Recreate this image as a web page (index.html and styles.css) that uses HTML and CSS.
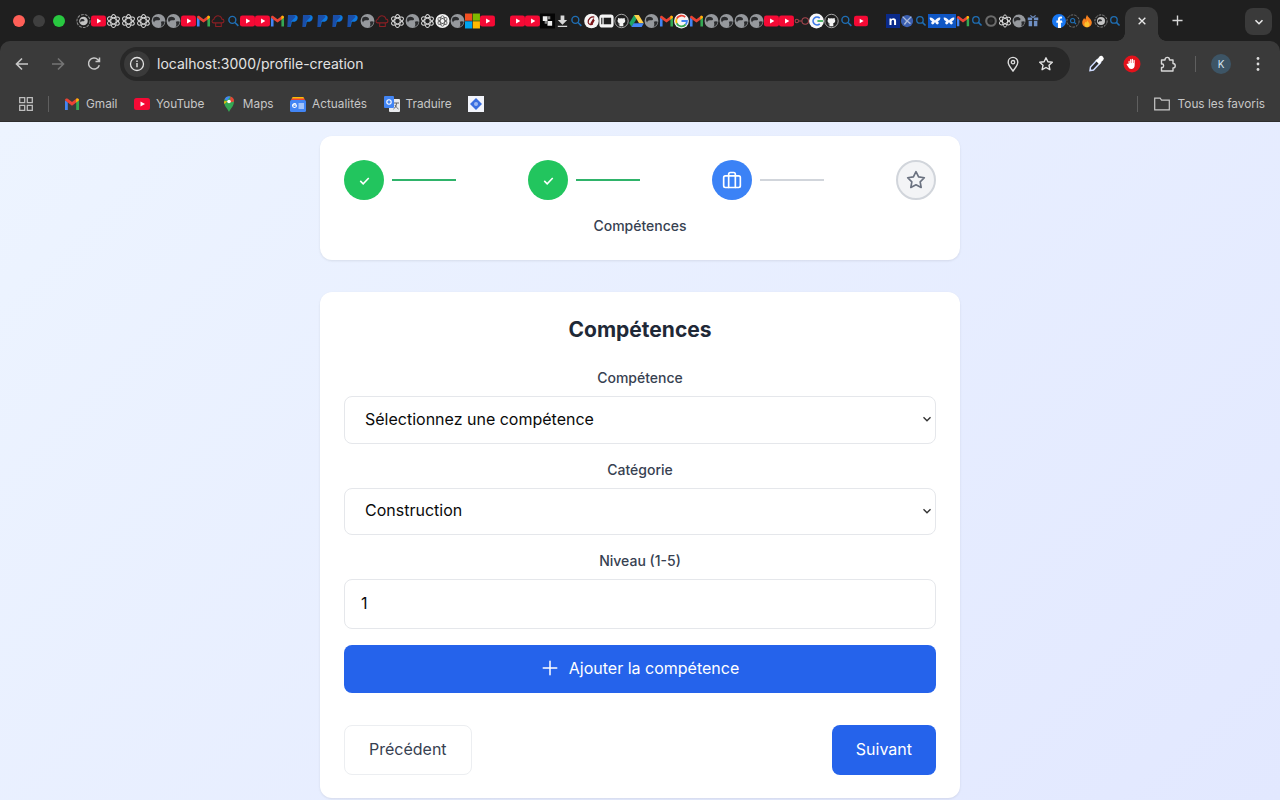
FILE: index.html
```html
<!DOCTYPE html>
<html lang="fr">
<head>
<meta charset="utf-8">
<title>Profile creation</title>
<link rel="stylesheet" href="styles.css">
</head>
<body>
<svg class="defs" aria-hidden="true">
  <symbol id="yt" viewBox="0 0 16 16"><rect y="2" width="16" height="12" rx="2.5" fill="#f50a35"/><path d="M6.5 5.4 11 8l-4.5 2.6z" fill="#fff"/></symbol>
  <symbol id="oa" viewBox="0 0 16 16"><g fill="none" stroke="#d8d8d8" stroke-width="1.100"><ellipse cx="8" cy="8" rx="2.900" ry="7"/><ellipse cx="8" cy="8" rx="2.900" ry="7" transform="rotate(60 8 8)"/><ellipse cx="8" cy="8" rx="2.900" ry="7" transform="rotate(120 8 8)"/></g></symbol>
  <symbol id="oaw" viewBox="0 0 16 16"><circle cx="8" cy="8" r="7.600" fill="#f4f4f4"/><g fill="none" stroke="#555" stroke-width=".9"><ellipse cx="8" cy="8" rx="2.400" ry="5.600"/><ellipse cx="8" cy="8" rx="2.400" ry="5.600" transform="rotate(60 8 8)"/><ellipse cx="8" cy="8" rx="2.400" ry="5.600" transform="rotate(120 8 8)"/></g></symbol>
  <symbol id="globe" viewBox="0 0 16 16"><circle cx="8" cy="8" r="7.400" fill="#96999d"/><path d="M3 4.200c3-1.600 5.500-.6 6.500 1 .8 1.400-1 2.300-2.600 2-1.700-.3-3.300.7-3.500 2.400C1.800 8 1.900 5.600 3 4.200zM10.500 8.800c1.500-.8 3.200-.8 4.200 0-.3 2.500-2 4.700-4.400 5.500.9-1.600 1-3.700.2-5.500z" fill="#2c2d2f"/></symbol>
  <symbol id="gring" viewBox="0 0 16 16"><circle cx="8" cy="8" r="7" fill="none" stroke="#8a8a8a" stroke-width="1.100" stroke-dasharray="3 1.200"/><circle cx="8" cy="8" r="4.600" fill="#c4c4c4"/><path d="M5 6.500c2-1 3.500-.4 4 .5.500 1-.7 1.500-1.700 1.300-1-.2-2 .3-2.100 1.400C4.200 9 4.300 7.400 5 6.500z" fill="#2c2d2f"/></symbol>
  <symbol id="gm" viewBox="0 0 16 16"><path d="M1 14V4.200L3.800 6v8z" fill="#4285f4"/><path d="M15 14V4.200L12.200 6v8z" fill="#34a853"/><path d="M1 4.200C1 2.600 2.700 1.900 3.800 2.800L8 6l4.200-3.200c1.100-.9 2.800-.2 2.800 1.400L12.200 6.600 8 9.700 3.800 6.600z" fill="#ea4335"/><path d="M12.200 2.800c1.100-.9 2.800-.2 2.800 1.400l-2.800 2.400z" fill="#fbbc04"/></symbol>
  <symbol id="cloud" viewBox="0 0 16 16"><path d="M3 10c-2.500 0-2.500-3.500 0-3.700C3.500 3 7 1.500 9.500 3c1.500.8 2 2 2.200 3 2.800 0 3 4-.2 4zM5 10v4h6v-4" fill="none" stroke="#8b1f24" stroke-width="1.100"/></symbol>
  <symbol id="search" viewBox="0 0 16 16"><circle cx="6.800" cy="6.800" r="3.700" fill="none" stroke="#1f6fb5" stroke-width="1.500"/><path d="m9.600 9.600 3.600 3.600" stroke="#1f6fb5" stroke-width="1.700"/></symbol>
  <symbol id="pp" viewBox="0 0 16 16"><path d="M5 1.500h5.200c2.600 0 3.800 1.500 3.300 3.700-.5 2.400-2.300 3.600-4.700 3.600H7.200L6.300 14H3.300z" fill="#0f7ae0"/><path d="M3.200 1.500h5c2 0 3 .8 3 2.300L6.700 8.500 5.800 14.500H2.500z" fill="#1a4ea8"/></symbol>
  <symbol id="ms" viewBox="0 0 16 16"><path d="M0 0h7.700v7.700H0z" fill="#f25022"/><path d="M8.300 0H16v7.700H8.300z" fill="#7fba00"/><path d="M0 8.300h7.700V16H0z" fill="#00a4ef"/><path d="M8.300 8.300H16V16H8.300z" fill="#ffb900"/></symbol>
  <symbol id="chess" viewBox="0 0 16 16"><rect width="16" height="16" fill="#050505"/><path d="M3 3h5v5H3zM8 8h5v5H8z" fill="#eee"/><path d="M8 3h3v3H8zM5 8h3v3H5z" fill="#888"/></symbol>
  <symbol id="dl" viewBox="0 0 16 16"><path d="M6 2h4v5h3l-5 5-5-5h3zM3 13h10v1.500H3z" fill="#d8d8d8"/></symbol>
  <symbol id="at" viewBox="0 0 16 16"><circle cx="8" cy="8" r="7.800" fill="#f5f5f5"/><path d="M11 3.800C7.500 3 4 6 4.500 9.500c.4 2.300 3 3 5 1.700M10.500 5.500 7.500 10.500c-.5 1 .8 1 1.500.2L11 7" fill="none" stroke="#7a1418" stroke-width="1.300"/></symbol>
  <symbol id="box" viewBox="0 0 16 16"><rect x=".4" y="1" width="15.200" height="14" rx="3" fill="#f5f5f5"/><rect x="5" y="4.500" width="8" height="7" fill="#1f1f1f"/><path d="M3 4.500v7" stroke="#1f1f1f" stroke-width="1.200"/></symbol>
  <symbol id="ghr" viewBox="0 0 16 16"><circle cx="8" cy="8" r="7.200" fill="#1f1f1f" stroke="#bbb" stroke-width=".9"/><path d="M5.800 13.500v-2c-1.500.3-1.900-.8-1.900-.8.500.1 1 .5 1.900.3 0-.3.200-.6.300-.7-1.300-.2-2.300-.8-2.300-2.600 0-.6.200-1.100.600-1.500-.1-.2-.2-.8.100-1.500 0 0 .5-.2 1.500.6a6 6 0 0 1 3.800 0c1-.8 1.500-.6 1.500-.6.300.7.200 1.300.1 1.500.4.400.6.900.6 1.500 0 1.800-1 2.400-2.300 2.600.2.200.3.500.3 1v2.200z" fill="#f2f2f2"/></symbol>
  <symbol id="drive" viewBox="0 0 16 16"><path d="M5.500 1.500h5L5 11 2.500 14 .3 10.200z" fill="#1fa463"/><path d="M5.500 1.500h5l5.300 8.800h-5z" fill="#ffd04b"/><path d="M5 10.300h10.800L13.600 14.500H2.500z" fill="#4285f4"/></symbol>
  <symbol id="goog" viewBox="0 0 16 16"><circle cx="8" cy="8" r="7.900" fill="#f5f5f5"/><path d="M12 3.800A5.800 5.800 0 0 0 2.900 5.500" fill="none" stroke="#ea4335" stroke-width="2"/><path d="M2.900 5.500a5.800 5.800 0 0 0 0 5" fill="none" stroke="#fbbc04" stroke-width="2"/><path d="M2.900 10.500a5.800 5.800 0 0 0 9.600 1.200" fill="none" stroke="#34a853" stroke-width="2"/><path d="M12.500 11.700c1-1 1.300-2.300 1.300-3.700H8" fill="none" stroke="#4285f4" stroke-width="2"/></symbol>
  <symbol id="chain" viewBox="0 0 16 16"><g fill="none" stroke="#a8454e" stroke-width="1.100"><circle cx="3" cy="8" r="1.800"/><circle cx="12" cy="8" r="3.500"/><path d="M5 8h3.500"/></g></symbol>
  <symbol id="gcirc" viewBox="0 0 16 16"><circle cx="8" cy="8" r="7.900" fill="#f7f7f7"/><path d="M11.500 5A4.200 4.200 0 1 0 11.500 11" fill="none" stroke="#3b78e7" stroke-width="1.800"/><path d="M9 8h6" stroke="#34a853" stroke-width="1.800"/></symbol>
  <symbol id="n" viewBox="0 0 16 16"><rect width="16" height="16" fill="#0a2a8a"/><path d="M4 12.500V5h2.200v1c.6-.8 1.400-1.200 2.400-1.200 1.800 0 2.900 1.200 2.900 3.200v4.500H9.200V8.400c0-1-.5-1.600-1.400-1.600-.9 0-1.500.7-1.500 1.700v4z" fill="#fff"/></symbol>
  <symbol id="shield" viewBox="0 0 16 16"><circle cx="8" cy="8" r="7" fill="#3b5fb0"/><path d="M3 3l5 5 5-5M5 12l3-4 4 3" fill="none" stroke="#a9b8da" stroke-width="1.600"/></symbol>
  <symbol id="fly" viewBox="0 0 16 16"><rect width="16" height="16" fill="#0f56c4"/><path d="M2 4c2-.5 5 1.500 6 3.500C9 5.500 12 3.500 14 4c.500 2-1 4-3 4.200 1.500.5 1.800 2.700.3 3.600C10 12.500 8.800 10.500 8 9c-.8 1.500-2 3.500-3.300 2.800C3.200 10.900 3.500 8.700 5 8.200 3 8 1.500 6 2 4z" fill="#f4f7ff"/></symbol>
  <symbol id="ring" viewBox="0 0 16 16"><circle cx="8" cy="8" r="5.500" fill="none" stroke="#6b6b6b" stroke-width="2.400"/><circle cx="8" cy="8" r="2.400" fill="#2a2a2a"/></symbol>
  <symbol id="gift" viewBox="0 0 16 16"><path d="M2 4h5v3H2zM9 4h5v3H9zM3 8h4v6H3zM9 8h4v6H9z" fill="#6f8fc2"/><path d="M5 1.500 8 4l3-2.500" fill="none" stroke="#6f8fc2" stroke-width="1.300"/></symbol>
  <symbol id="fb" viewBox="0 0 16 16"><circle cx="8" cy="8" r="8" fill="#1877f2"/><path d="M6.800 16v-6H5V7.500h1.800V6c0-2 1.200-3.100 3-3.100.9 0 1.700.2 1.700.2v2h-1c-1 0-1.300.6-1.300 1.200v1.200h2.200L12 10H10.200v6z" fill="#fff"/></symbol>
  <symbol id="srch" viewBox="0 0 16 16"><circle cx="8" cy="8" r="7" fill="none" stroke="#7d7d7d" stroke-width="1" stroke-dasharray="3 1.200"/><circle cx="7.600" cy="7.600" r="2.400" fill="none" stroke="#1f6fb5" stroke-width="1.200"/><path d="m9.400 9.400 2 2" stroke="#1f6fb5" stroke-width="1.300"/></symbol>
  <symbol id="fire" viewBox="0 0 16 16"><path d="M8 .8c.5 2.700 5.500 4.700 5.500 9 0 3.200-2.500 5.400-5.500 5.400S2.500 13 2.500 9.800C2.500 7.500 4 6 4.700 4.700c.5 1 1 1.500 1.600 1.700C6.500 4.500 7 2.500 8 .8z" fill="#f7811e"/><path d="M8.300 7c.3 1.500 2.700 2.700 2.700 5 0 1.800-1.500 3-3 3s-3-1.200-3-3c0-1.500 1-2.500 1.500-3.200.3.500.6.800 1 .9C7.600 8.700 7.800 8 8.300 7z" fill="#fbc02d"/></symbol>
</svg>

<header class="chrome">
  <div class="tabstrip">
    <div class="lights"><span class="light red"></span><span class="light grey"></span><span class="light green"></span></div>
    <div class="favs">
      <svg class="fav"><use href="#gring"/></svg><svg class="fav"><use href="#yt"/></svg><svg class="fav"><use href="#oa"/></svg><svg class="fav"><use href="#oa"/></svg><svg class="fav"><use href="#oa"/></svg><svg class="fav"><use href="#globe"/></svg><svg class="fav"><use href="#globe"/></svg><svg class="fav"><use href="#yt"/></svg><svg class="fav"><use href="#gm"/></svg><svg class="fav"><use href="#cloud"/></svg><svg class="fav"><use href="#search"/></svg><svg class="fav"><use href="#yt"/></svg><svg class="fav"><use href="#yt"/></svg><svg class="fav"><use href="#gm"/></svg><svg class="fav"><use href="#pp"/></svg><svg class="fav"><use href="#pp"/></svg><svg class="fav"><use href="#pp"/></svg><svg class="fav"><use href="#pp"/></svg><svg class="fav"><use href="#pp"/></svg><svg class="fav"><use href="#globe"/></svg><svg class="fav"><use href="#cloud"/></svg><svg class="fav"><use href="#oa"/></svg><svg class="fav"><use href="#globe"/></svg><svg class="fav"><use href="#oa"/></svg><svg class="fav"><use href="#oaw"/></svg><svg class="fav"><use href="#globe"/></svg><svg class="fav"><use href="#ms"/></svg><svg class="fav"><use href="#yt"/></svg><span class="fav"></span><svg class="fav"><use href="#yt"/></svg><svg class="fav"><use href="#yt"/></svg><svg class="fav"><use href="#chess"/></svg><svg class="fav"><use href="#dl"/></svg><svg class="fav"><use href="#search"/></svg><svg class="fav"><use href="#at"/></svg><svg class="fav"><use href="#box"/></svg><svg class="fav"><use href="#ghr"/></svg><svg class="fav"><use href="#drive"/></svg><svg class="fav"><use href="#globe"/></svg><svg class="fav"><use href="#gm"/></svg><svg class="fav"><use href="#goog"/></svg><svg class="fav"><use href="#gm"/></svg><svg class="fav"><use href="#globe"/></svg><svg class="fav"><use href="#globe"/></svg><svg class="fav"><use href="#globe"/></svg><svg class="fav"><use href="#globe"/></svg><svg class="fav"><use href="#yt"/></svg><svg class="fav"><use href="#yt"/></svg><svg class="fav"><use href="#chain"/></svg><svg class="fav"><use href="#gcirc"/></svg><svg class="fav"><use href="#ghr"/></svg><svg class="fav"><use href="#search"/></svg>
      <svg class="fav nar"><use href="#yt"/></svg><span class="fav sp1"></span><svg class="fav nar"><use href="#n"/></svg><svg class="fav nar"><use href="#shield"/></svg><svg class="fav nar"><use href="#search"/></svg><svg class="fav nar"><use href="#fly"/></svg><svg class="fav nar"><use href="#fly"/></svg><svg class="fav nar"><use href="#gm"/></svg><svg class="fav nar"><use href="#search"/></svg><svg class="fav nar"><use href="#ring"/></svg><svg class="fav nar"><use href="#oa"/></svg><svg class="fav nar"><use href="#globe"/></svg><svg class="fav nar"><use href="#gift"/></svg><span class="fav sp2"></span><svg class="fav nar"><use href="#fb"/></svg><svg class="fav nar"><use href="#srch"/></svg><svg class="fav nar"><use href="#fire"/></svg><svg class="fav nar"><use href="#gring"/></svg><svg class="fav nar"><use href="#search"/></svg>
    </div>
    <div class="tab"><svg class="ic12" viewBox="0 0 12 12"><path d="m2 2 8 8M10 2l-8 8" stroke="#e8e8e8" stroke-width="1.600"/></svg></div>
    <svg class="newtab" viewBox="0 0 12 12"><path d="M6 .5v11M.5 6h11" stroke="#d8d8d8" stroke-width="1.500"/></svg>
    <div class="tabmenu"><svg class="ic10" viewBox="0 0 10 10"><path d="m1.500 3.200 3.500 3.500 3.500-3.500" fill="none" stroke="#e8e8e8" stroke-width="1.600"/></svg></div>
  </div>

  <div class="toolbar">
    <svg class="tb" viewBox="0 0 16 16"><path d="M14 8H2.500M8 2.500 2.500 8 8 13.500" fill="none" stroke="#c8c8c8" stroke-width="1.600"/></svg>
    <svg class="tb" viewBox="0 0 16 16"><path d="M2 8h11.500M8 2.500 13.500 8 8 13.500" fill="none" stroke="#757575" stroke-width="1.600"/></svg>
    <svg class="tb" viewBox="0 0 16 16"><path d="M13.300 9.200A5.500 5.500 0 1 1 12 3.700l1.500 1.700M13.500 1.500v4h-4" fill="none" stroke="#c8c8c8" stroke-width="1.500"/></svg>
    <div class="omnibox">
      <div class="sitechip"><svg class="ic16" viewBox="0 0 16 16"><circle cx="8" cy="8" r="6.500" fill="none" stroke="#e3e3e3" stroke-width="1.300"/><path d="M8 7v4.200M8 4.400v1.500" stroke="#e3e3e3" stroke-width="1.400"/></svg></div>
      <span class="url">localhost:3000/profile-creation</span>
      <svg class="omni-ic" viewBox="0 0 16 16"><path d="M8 15C5.500 11.500 3.200 9 3.200 6.200a4.800 4.800 0 0 1 9.600 0C12.800 9 10.500 11.500 8 15z" fill="none" stroke="#dcdcdc" stroke-width="1.400"/><circle cx="8" cy="6.200" r="1.700" fill="none" stroke="#dcdcdc" stroke-width="1.300"/></svg>
      <svg class="omni-ic" viewBox="0 0 16 16"><path d="m8 1.800 1.900 4 4.400.5-3.300 3 .9 4.400L8 11.500l-3.900 2.200.9-4.400-3.300-3 4.400-.5z" fill="none" stroke="#e3e3e3" stroke-width="1.400" stroke-linejoin="round"/></svg>
    </div>
    <div class="ext">
      <svg class="ext-ic" viewBox="0 0 18 18"><path d="M10.500 4.500 13.500 7.500 6.500 15 3 15.500 3.500 12z" fill="#2b2b2b" stroke="#cfdcff" stroke-width="1.500"/><path d="m9 5 4 4M11 5l2-3c.8-.8 1.700-.5 2.400.2s1 1.600.2 2.400L13 7z" fill="#fff" stroke="#fff" stroke-width="1.500"/></svg>
      <svg class="ext-ic" viewBox="0 0 18 18"><circle cx="9" cy="9" r="8.500" fill="#e3121b"/><path d="M5.500 9V6.500c0-1 1.200-1 1.200 0V8h.4V4.800c0-1 1.300-1 1.300 0V8h.4V4.500c0-1 1.300-1 1.300 0V8h.4V5.500c0-1 1.200-1 1.200 0V10c0 2.500-1.300 4-3.400 4-1.600 0-2.400-.8-3-2L3.800 9.800c-.5-.9.600-1.500 1.200-.7z" fill="#fff"/></svg>
      <svg class="ext-ic" viewBox="0 0 18 18"><path d="M2.500 5H6c0-3.500 4.500-3.500 4.500 0H14v3.500c3 0 3 4.500 0 4.500v3H2.500v-3.500h1c1.500 0 1.500-3.500 0-3.500h-1z" fill="none" stroke="#d8d8d8" stroke-width="1.400" stroke-linejoin="round"/></svg>
      <span class="vsep"></span>
      <span class="avatar">K</span>
      <svg class="menu" viewBox="0 0 4 16"><circle cx="2" cy="2.500" r="1.400" fill="#dcdcdc"/><circle cx="2" cy="8" r="1.400" fill="#dcdcdc"/><circle cx="2" cy="13.500" r="1.400" fill="#dcdcdc"/></svg>
    </div>
  </div>

  <nav class="bookmarks">
    <svg class="apps" viewBox="0 0 14 14"><path d="M.7.700h5v5h-5zM8.300.700h5v5h-5zM.7 8.300h5v5h-5zM8.300 8.300h5v5h-5z" fill="none" stroke="#bdbdbd" stroke-width="1.300"/></svg>
    <span class="hsep first"></span>
    <a class="bm"><svg class="bm-ic"><use href="#gm"/></svg>Gmail</a>
    <a class="bm"><svg class="bm-ic"><use href="#yt"/></svg>YouTube</a>
    <a class="bm"><svg class="bm-ic" viewBox="0 0 16 16"><path d="M8 16C6.500 12.500 3 10 3 5.500a5 5 0 0 1 10 0C13 10 9.500 12.500 8 16z" fill="#34a853"/><path d="M3.500 3.300a5 5 0 0 1 6-2.700L6 4.500z" fill="#4285f4"/><path d="M9.500.6A5 5 0 0 1 13 5.500l-4 1z" fill="#ea4335"/><path d="M3 5.500c0 1 .2 1.700.5 2.500L6.500 5z" fill="#fbbc04"/><circle cx="8" cy="5.500" r="1.800" fill="#fff"/></svg>Maps</a>
    <a class="bm"><svg class="bm-ic" viewBox="0 0 16 16"><path d="M2.500 1h11l1 3h-13z" fill="#fbbc04"/><path d="M1.500 2.500h13v2h-13z" fill="#ea4335"/><rect y="4" width="16" height="12" rx="1.500" fill="#4285f4"/><path d="M2.500 9h3.800v1.200c0 1.500-3.800 2-3.800-.7C2.500 7.700 4.800 7 6 8M8.500 8H14M8.500 10H14M8.500 12H14" fill="none" stroke="#fff" stroke-width="1.100"/></svg>Actualités</a>
    <a class="bm"><svg class="bm-ic" viewBox="0 0 16 16"><rect x="5" y="3" width="11" height="13" rx="1" fill="#e8eaed"/><rect width="10" height="12" rx="1" fill="#4285f4"/><circle cx="5" cy="6" r="2.200" fill="none" stroke="#fff" stroke-width="1.100"/><path d="M10 7h5M12.500 7c0 3-1.500 5-3 6M11 9c.6 1.500 2 3 3.500 4" fill="none" stroke="#5f6368" stroke-width="1"/></svg>Traduire</a>
    <svg class="bm-ic" viewBox="0 0 16 16"><rect width="16" height="16" fill="#f2f4fb"/><path d="M8 2 14 8 8 14 2 8z" fill="#3b6fe0"/><circle cx="8" cy="8" r="2" fill="#9db8f0"/></svg>
    <span class="hsep last"></span>
    <a class="bm all"><svg class="folder" viewBox="0 0 16 14"><path d="M.7 12.800V1.200h5.400l1.500 2h7.700v9.600z" fill="none" stroke="#c8c8c8" stroke-width="1.200"/></svg>Tous les favoris</a>
  </nav>
</header>

<main class="page">
  <div class="column">
    <section class="card stepper">
      <div class="steps">
        <div class="step">
          <span class="dot done"><svg class="ic14" viewBox="0 0 14 14"><path d="m3.500 7.300 2.400 2.400 4.600-4.800" fill="none" stroke="#fff" stroke-width="1.300"/></svg></span>
          <span class="line on"></span>
        </div>
        <div class="step">
          <span class="dot done"><svg class="ic14" viewBox="0 0 14 14"><path d="m3.500 7.300 2.400 2.400 4.600-4.800" fill="none" stroke="#fff" stroke-width="1.300"/></svg></span>
          <span class="line on"></span>
        </div>
        <div class="step">
          <span class="dot current"><svg class="ic20" viewBox="0 0 24 24" fill="none" stroke="#fff" stroke-width="2" stroke-linecap="round" stroke-linejoin="round"><rect x="2" y="7" width="20" height="14" rx="2"/><path d="M16 21V5a2 2 0 0 0-2-2h-4a2 2 0 0 0-2 2v16"/></svg></span>
          <span class="line"></span>
        </div>
        <div class="step">
          <span class="dot todo"><svg class="ic20" viewBox="0 0 24 24" fill="none" stroke="#6b7280" stroke-width="2" stroke-linejoin="round"><path d="m12 2 3.100 6.300 6.900 1-5 4.900 1.200 6.800-6.200-3.200L5.800 21 7 14.200 2 9.300l6.900-1z"/></svg></span>
        </div>
      </div>
      <p class="step-label">Compétences</p>
    </section>

    <section class="card form">
      <h1 class="title">Compétences</h1>
      <div class="field">
        <label class="label" for="skill">Compétence</label>
        <div class="select-wrap">
          <select id="skill" class="control select"><option>Sélectionnez une compétence</option></select>
          <svg class="chev" viewBox="0 0 10 10"><path d="m1.500 3.300 3.500 3.500 3.500-3.500" fill="none" stroke="#333" stroke-width="1.400"/></svg>
        </div>
      </div>
      <div class="field">
        <label class="label" for="cat">Catégorie</label>
        <div class="select-wrap">
          <select id="cat" class="control select"><option>Construction</option></select>
          <svg class="chev" viewBox="0 0 10 10"><path d="m1.500 3.300 3.500 3.500 3.500-3.500" fill="none" stroke="#333" stroke-width="1.400"/></svg>
        </div>
      </div>
      <div class="field">
        <label class="label" for="lvl">Niveau (1-5)</label>
        <input id="lvl" class="control number" type="text" value="1">
      </div>
      <button class="btn primary add"><svg class="ic18" viewBox="0 0 24 24" fill="none" stroke="#fff" stroke-width="2" stroke-linecap="round"><path d="M12 3v18M3 12h18"/></svg>Ajouter la compétence</button>
      <div class="actions">
        <button class="btn ghost">Précédent</button>
        <button class="btn primary">Suivant</button>
      </div>
    </section>
  </div>
</main>
</body>
</html>
```

FILE: styles.css
```css
* { box-sizing: border-box; }
html, body { margin: 0; height: 100%; }
body {
  display: flex;
  flex-direction: column;
  height: 800px;
  overflow: hidden;
  font-family: Inter, "Liberation Sans", sans-serif;
  background: #1f1f1f;
}
.defs { display: none; }

/* tab strip */
.chrome { flex: none; }
.tabstrip {
  display: flex;
  align-items: flex-start;
  height: 41px;
  background: #1f1f1f;
}
.lights {
  display: flex;
  gap: 8px;
  margin: 15px 0 0 13px;
  width: 63px;
  flex: none;
}
.light { width: 12px; height: 12px; border-radius: 50%; }
.light.red { background: #ff5f57; }
.light.grey { background: #3f3f3f; }
.light.green { background: #28c840; }
.favs {
  display: flex;
  flex: none;
  width: 1049px;
  height: 16px;
  margin-top: 13px;
}
.fav { flex: none; width: 14.96px; height: 16px; overflow: visible; }
.fav.nar { width: 14px; }
.fav.sp1 { width: 18px; }
.fav.sp2 { width: 12px; }
.tab {
  position: relative;
  flex: none;
  display: flex;
  align-items: center;
  justify-content: center;
  width: 33px;
  height: 34px;
  margin-top: 7px;
  padding-bottom: 6px;
  border-radius: 10px 10px 0 0;
  background: #3a3a3a;
}
.tab::before, .tab::after {
  content: "";
  position: absolute;
  bottom: 0;
  width: 8px;
  height: 8px;
}
.tab::before { left: -8px; background: radial-gradient(circle at 0 0, transparent 7.5px, #3a3a3a 8px); }
.tab::after { right: -8px; background: radial-gradient(circle at 100% 0, transparent 7.5px, #3a3a3a 8px); }
.ic12 { width: 10px; height: 10px; }
.newtab { flex: none; width: 11px; height: 11px; margin: 15px 0 0 14px; }
.tabmenu {
  flex: none;
  display: flex;
  align-items: center;
  justify-content: center;
  width: 27px;
  height: 27px;
  margin: 8px 0 0 62px;
  border-radius: 8px;
  background: #3a3a3a;
}
.ic10 { width: 10px; height: 10px; }

/* toolbar */
.toolbar {
  display: flex;
  align-items: center;
  height: 45px;
  padding-left: 14px;
  background: #3a3a3a;
  border-radius: 10px 10px 0 0;
}
.tb { flex: none; width: 16px; height: 16px; margin-right: 20px; }
.omnibox {
  flex: none;
  display: flex;
  align-items: center;
  width: 950px;
  height: 34px;
  margin-left: -2px;
  padding: 0 16px 0 4px;
  border-radius: 17px;
  background: #282828;
}
.sitechip {
  flex: none;
  display: flex;
  align-items: center;
  justify-content: center;
  width: 26px;
  height: 26px;
  border-radius: 50%;
  background: #3a3a3a;
}
.ic16 { width: 16px; height: 16px; }
.url {
  flex: 1;
  margin-left: 7px;
  color: #e3e3e3;
  font-size: 14px;
  white-space: nowrap;
}
.omni-ic { flex: none; width: 16px; height: 16px; margin-left: 17px; }
.ext { flex: none; display: flex; align-items: center; margin-left: 17px; }
.ext-ic { flex: none; width: 18px; height: 18px; margin-right: 18px; }
.vsep { flex: none; width: 1px; height: 16px; margin-right: 15px; background: #5f5f5f; }
.avatar {
  flex: none;
  display: flex;
  align-items: center;
  justify-content: center;
  width: 20px;
  height: 20px;
  margin-right: 25px;
  border-radius: 50%;
  background: #3d5566;
  color: #d5e3ee;
  font-size: 10px;
}
.menu { flex: none; width: 4px; height: 16px; }

/* bookmarks */
.bookmarks {
  display: flex;
  align-items: center;
  height: 36px;
  padding-left: 19px;
  padding-right: 15px;
  background: #3a3a3a;
  border-bottom: 1px solid #2e2e2e;
}
.apps { flex: none; width: 14px; height: 14px; }
.hsep { flex: none; width: 1px; height: 16px; background: #5f5f5f; }
.hsep.first { margin: 0 15px; }
.hsep.last { margin-left: auto; margin-right: 16px; }
.bm {
  flex: none;
  display: flex;
  align-items: center;
  gap: 6px;
  margin-right: 16.5px;
  color: #c7c7c7;
  font-size: 11.800px;
  white-space: nowrap;
}
.bm.all { margin-right: 0; gap: 8px; }
.bm-ic { flex: none; width: 16px; height: 16px; }
.folder { flex: none; width: 16px; height: 14px; }

/* page */
.page {
  flex: 1;
  min-height: 0;
  overflow: hidden;
  padding-top: 14px;
  background: linear-gradient(135deg, #edf4ff 0%, #e2e8ff 100%);
}
.column {
  display: flex;
  flex-direction: column;
  gap: 32px;
  width: 640px;
  margin: 0 auto;
}
.card {
  padding: 24px;
  border-radius: 12px;
  background: #fff;
  box-shadow: 0 1px 3px rgba(0, 0, 0, .06), 0 1px 2px rgba(0, 0, 0, .03);
}
.steps { display: flex; justify-content: space-between; }
.step { display: flex; align-items: center; }
.dot {
  display: flex;
  align-items: center;
  justify-content: center;
  width: 40px;
  height: 40px;
  border-radius: 50%;
}
.done { background: #22c55e; }
.current { background: #3b82f6; }
.todo { background: #f3f4f6; border: 2px solid #d1d5db; }
.ic14 { width: 17px; height: 17px; }
.ic20 { width: 20px; height: 20px; }
.line { width: 64px; height: 2px; margin-left: 8px; background: #d1d5db; }
.line.on { background: #2fb36a; }
.step-label {
  margin: 16px 0 0;
  color: #374151;
  font-size: 14px;
  font-weight: 500;
  line-height: 20px;
  text-align: center;
}

.form { height: 506px; }
.title {
  margin: 0 0 24px;
  color: #1f2937;
  font-size: 21px;
  font-weight: 700;
  line-height: 28px;
  text-align: center;
}
.field { display: flex; flex-direction: column; margin-bottom: 16px; }
.label {
  margin-bottom: 8px;
  color: #374151;
  font-size: 14px;
  font-weight: 450;
  line-height: 19px;
  text-align: center;
}
.control {
  display: block;
  width: 100%;
  border: 1px solid #e5e7eb;
  border-radius: 8px;
  background: #fff;
  color: #0a0a0a;
  font-family: inherit;
  font-size: 16px;
  outline: none;
}
.field .control { margin-top: 1px; }
.select-wrap { position: relative; margin-top: 1px; }
.select-wrap .control { margin-top: 0; }
.select { height: 47.5px; padding: 0 32px 2px 20px; appearance: none; -webkit-appearance: none; }
.number { height: 50px; padding: 0 16px 2px; }
.chev { position: absolute; right: 4px; top: 18px; width: 10px; height: 10px; }
.btn {
  display: flex;
  align-items: center;
  justify-content: center;
  height: 50px;
  padding: 0 24px 2px;
  border-radius: 8px;
  font-family: inherit;
  font-size: 16px;
  font-weight: 400;
}
.primary { border: 0; background: #2563eb; color: #fff; }
.ghost { border: 1px solid #eceef1; background: #fff; color: #374151; }
.add { width: 100%; height: 48px; gap: 10px; }
.ic18 { width: 18px; height: 18px; }
.actions { display: flex; justify-content: space-between; margin-top: 32px; }
```
